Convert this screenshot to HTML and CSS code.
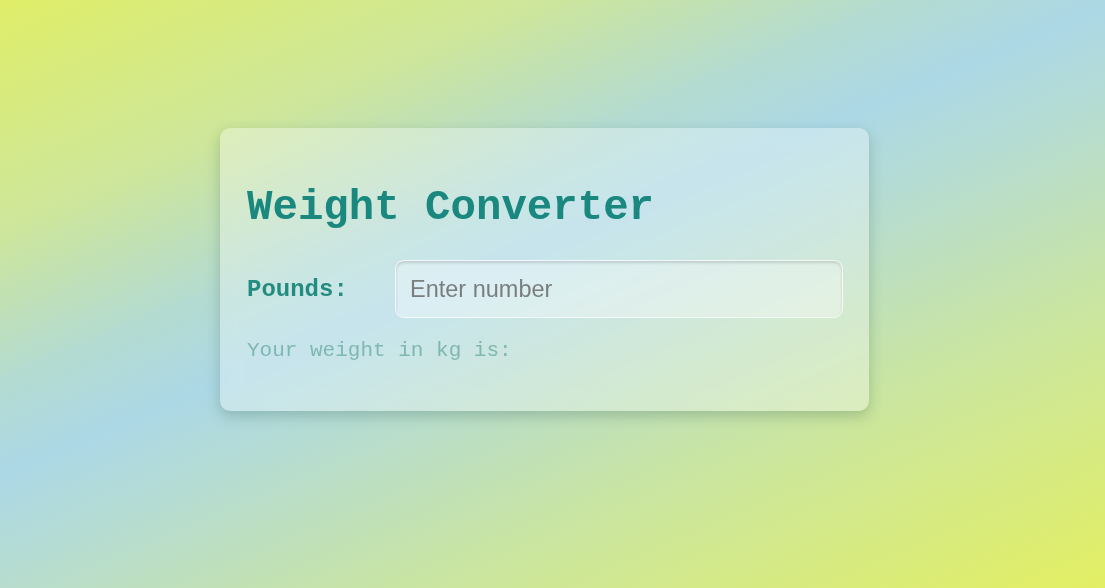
FILE: index.html
```html
<!DOCTYPE html>
<html lang="en">
<head>
<meta charset="utf-8">
<title>Weight Converter</title>
<link rel="stylesheet" href="styles.css">
</head>
<body>
<main class="page">
  <section class="card">
    <h1 class="title">Weight Converter</h1>
    <div class="row">
      <label class="label" for="pounds">Pounds:</label>
      <input class="input" id="pounds" type="number" placeholder="Enter number">
    </div>
    <p class="result">Your weight in kg is:</p>
  </section>
</main>
</body>
</html>
```

FILE: styles.css
```css
html, body {
  margin: 0;
  padding: 0;
  height: 100%;
}

body {
  background: linear-gradient(157deg, #e0ee68 0%, #cde69b 22%, #b4dbd0 36%, #acd8e6 45%, #b6dcd0 55%, #c9e5a2 72%, #e3ef63 100%);
  font-family: "Liberation Mono", "Courier New", monospace;
}

.page {
  box-sizing: border-box;
  height: 100%;
  display: flex;
  justify-content: center;
  align-items: flex-start;
  padding: 128px 16px 0 0;
}

.card {
  box-sizing: border-box;
  width: 649px;
  height: 283px;
  padding: 56px 26px 0 27px;
  border-radius: 10px;
  background: rgba(255, 255, 255, 0.32);
  backdrop-filter: blur(10px);
  box-shadow: 0 5px 14px rgba(40, 80, 60, 0.26);
}

.title {
  margin: 0;
  font-size: 42.4px;
  line-height: 48px;
  font-weight: bold;
  color: #1a887f;
}

.row {
  display: flex;
  align-items: center;
  margin-top: 28px;
}

.label {
  width: 148px;
  flex: none;
  font-size: 24px;
  line-height: 27px;
  font-weight: bold;
  color: #238b80;
}

.input {
  box-sizing: border-box;
  flex: 1;
  height: 58px;
  padding: 0 14px;
  border: 1px solid rgba(255, 255, 255, 0.6);
  border-radius: 9px;
  background: rgba(255, 255, 255, 0.35);
  box-shadow: inset 0 2px 3px rgba(0, 0, 0, 0.14);
  font-family: "Liberation Sans", Arial, sans-serif;
  font-size: 23.5px;
  color: #444;
  outline: none;
}

.input::placeholder {
  color: #7a7e7e;
}

.result {
  margin: 21px 0 0;
  font-size: 21px;
  line-height: 24px;
  color: #7fb8b0;
}
```
